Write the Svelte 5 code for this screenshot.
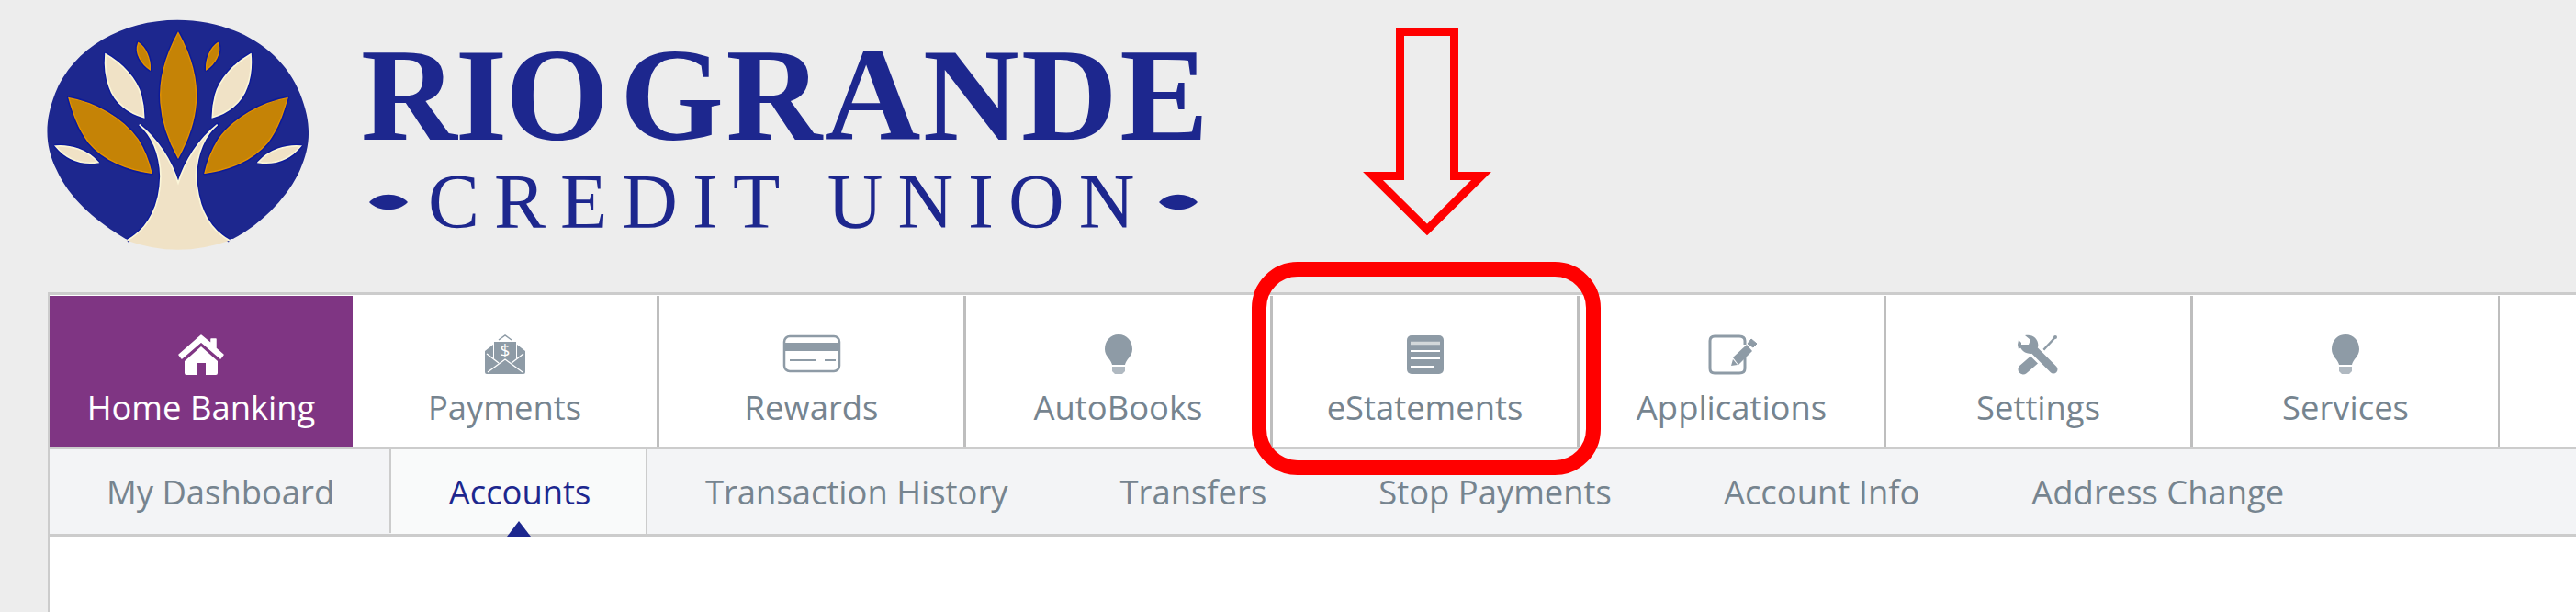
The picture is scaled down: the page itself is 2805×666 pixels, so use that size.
<script>
  const mainItems = [
    { label: "Home Banking", icon: "home", active: true },
    { label: "Payments", icon: "payment" },
    { label: "Rewards", icon: "card" },
    { label: "AutoBooks", icon: "bulb" },
    { label: "eStatements", icon: "statement" },
    { label: "Applications", icon: "edit" },
    { label: "Settings", icon: "tools" },
    { label: "Services", icon: "bulb" },
  ];
  const subItems = [
    "My Dashboard",
    "Accounts",
    "Transaction History",
    "Transfers",
    "Stop Payments",
    "Account Info",
    "Address Change",
  ];
  // leaves of the emblem, left side; the right side is mirrored round x=462
  const goldLeaves = [
    "M105 275C190 290 280 340 330 410C355 450 368 490 375 520C300 510 220 480 170 420C135 375 118 320 105 275Z",
    "M332 95C355 110 372 145 370 182C345 165 318 130 332 95Z",
  ];
  const creamLeaves = [
    "M225 132C275 160 325 210 340 265C348 295 350 315 350 338C300 325 255 290 238 240C225 205 222 165 225 132Z",
    "M62 432C110 428 165 445 200 485C150 492 100 478 62 432Z",
  ];
  const centerLeaf =
    "M462 62C420 140 400 220 405 290C410 360 440 430 462 470C484 430 515 360 520 290C525 220 505 140 462 62Z";
  const trunkSides =
    "M335 362C375 395 403 455 405 530C403 620 370 700 295 740M630 740C555 700 525 620 520 530C522 455 550 395 590 362C530 410 485 480 462 552C440 480 395 410 335 362";
  const trunk =
    "M335 362C375 395 403 455 405 530C403 620 370 700 295 740Q460 800 630 740C555 700 525 620 520 530C522 455 550 395 590 362C530 410 485 480 462 552C440 480 395 410 335 362Z";
</script>

<div class="page">
  <header class="brand">
    <svg class="emblem" viewBox="0 0 930 810">
      <path d="M460 20C640 20 800 110 860 260C900 360 895 430 860 510C820 600 730 690 640 735H290C200 680 110 610 65 510C25 430 25 350 60 260C120 110 280 20 460 20Z" fill="#1d278e" />
      {#each [false, true] as mirrored}
        <g transform={mirrored ? "translate(924 0) scale(-1 1)" : ""}>
          {#each goldLeaves as d}
            <path {d} class="halo" />
            <path {d} class="gold" />
          {/each}
          {#each creamLeaves as d}
            <path {d} class="halo" />
            <path {d} class="cream" />
          {/each}
        </g>
      {/each}
      <path d={centerLeaf} class="halo" />
      <path d={centerLeaf} class="gold" />
      <path d={trunkSides} class="halo" />
      <path d={trunk} class="trunk" />
      <path d={trunkSides} class="trunk-edge" />
    </svg>
    <div class="wordmark">
      <div class="name">RIO <span class="grande">GRANDE</span></div>
      <div class="sub">
        <svg class="dash" viewBox="0 0 42 18"><path d="M0 9C10 -2 32 -2 42 9C32 20 10 20 0 9Z" /></svg>
        <span class="union">CREDIT UNION</span>
        <svg class="dash" viewBox="0 0 42 18"><path d="M0 9C10 -2 32 -2 42 9C32 20 10 20 0 9Z" /></svg>
      </div>
    </div>
  </header>

  <section class="panel">
    <nav class="main">
      {#each mainItems as item}
        <div class="item" class:active={item.active}>
          <svg class="icon" viewBox="0 0 64 44">
            {#if item.icon == "home"}
              <path d="M32 1L8 22L11 26L32 8L53 26L56 22L48 15V5H43V10Z" fill="currentColor" stroke="currentColor" stroke-width="1.5" stroke-linejoin="round" />
              <path d="M32 13L14 29V42Q14 44 16 44H27V31H37V44H48Q50 44 50 42V29Z" fill="currentColor" />
            {:else if item.icon == "payment"}
              <path d="M10 18L19 11V26H45V11L54 18V41Q54 43 52 43H12Q10 43 10 41Z" fill="currentColor" />
              <rect x="20" y="8" width="24" height="20" fill="currentColor" />
              <path d="M25 6L32 1L39 6" fill="none" stroke="currentColor" stroke-width="1.5" />
              <path d="M13 41L32 27L51 41M12 21L25 31M52 21L39 31" stroke="#fff" stroke-width="1.4" fill="none" />
              <text x="32" y="24" text-anchor="middle" class="dollar">$</text>
            {:else if item.icon == "card"}
              <rect x="2" y="2" width="60" height="38" rx="6" fill="none" stroke="currentColor" stroke-width="2.5" />
              <rect x="2" y="9" width="60" height="9" fill="currentColor" />
              <path d="M8 28H36M46 28H58" stroke="currentColor" stroke-width="2" />
            {:else if item.icon == "bulb"}
              <path d="M32 0C23 0 17 7 17 16C17 24 24 27 25 33H39C40 27 47 24 47 16C47 7 41 0 32 0Z" fill="currentColor" />
              <path d="M25 35H39V40L36 43H28L25 40Z" fill="currentColor" opacity="0.7" />
            {:else if item.icon == "statement"}
              <rect x="12" y="1" width="40" height="42" rx="5" fill="currentColor" />
              <path d="M16 9.5H48" stroke="#d3d8da" stroke-width="3.5" />
              <path d="M16 18H48M16 26H48M16 35H41" stroke="#fff" stroke-width="2" />
            {:else if item.icon == "edit"}
              <path d="M46 11V7Q46 2 40 2H13Q8 2 8 7V37Q8 42 13 42H40Q46 42 46 37V21" fill="none" stroke="currentColor" stroke-width="3" />
              <path d="M48 11L54 18L39 33L33 25Z" fill="currentColor" />
              <path d="M31 34L33 27L38 33Z" fill="currentColor" />
              <path d="M49 10L53 5L59 10L55 14Z" fill="currentColor" stroke="currentColor" stroke-linejoin="round" />
            {:else if item.icon == "tools"}
              <path d="M50 3L37 17" stroke="currentColor" stroke-width="2.5" />
              <circle cx="50" cy="3" r="2" fill="currentColor" />
              <path d="M30 25L15 38" stroke="currentColor" stroke-width="11" stroke-linecap="round" />
              <path d="M25 15L49 39" stroke="#fff" stroke-width="15" />
              <path d="M25 15L48 38" stroke="currentColor" stroke-width="9" stroke-linecap="round" />
              <path d="M17 1C26 -1 33 6 31 14L24 21C17 21 12 17 11 11L21 11L23 6Z" fill="currentColor" />
              <path d="M10 6L13 9L13 14L10 16L9 11Z" fill="currentColor" />
            {/if}
          </svg>
          <span>{item.label}</span>
        </div>
      {/each}
    </nav>
    <nav class="sub-nav">
      {#each subItems as item, i}
        <div class="sub-item" class:current={i == 1} class:first={i == 0}>{item}</div>
      {/each}
    </nav>
    <div class="content"></div>
  </section>

  <svg class="callout-arrow" viewBox="0 0 142 227">
    <path d="M41.5 4.5H100.5V161.5H130L71 220L12 161.5H41.5Z" fill="none" stroke="#f00" stroke-width="9" />
  </svg>
  <div class="callout-box"></div>
</div>

<style>
  :global(body) {
    margin: 0;
    background: #ededed;
  }
  .page {
    position: relative;
    height: 666px;
    overflow: hidden;
    font-family: "Open Sans", sans-serif;
  }
  .brand {
    display: flex;
    height: 318px;
    padding: 15px 0 0 40px;
    box-sizing: border-box;
  }
  .emblem {
    width: 310px;
    height: 270px;
    flex: none;
  }
  .halo {
    fill: none;
    stroke: #0c1a9a;
    stroke-width: 13;
    stroke-linejoin: round;
  }
  .gold {
    fill: #c58306;
    stroke: #e39200;
    stroke-width: 4;
  }
  .cream {
    fill: #f0e2c6;
    stroke: #fbf6d8;
    stroke-width: 5;
  }
  .trunk {
    fill: #f0e2c6;
  }
  .trunk-edge {
    fill: none;
    stroke: #fbf6d8;
    stroke-width: 5;
  }
  .wordmark {
    margin-left: 43px;
    font-family: "Liberation Serif", serif;
    color: #1d278e;
  }
  .name {
    font-size: 145px;
    font-weight: bold;
    line-height: 96px;
    letter-spacing: -2px;
    margin-top: 40px;
    word-spacing: -20px;
    white-space: nowrap;
  }
  .grande {
    letter-spacing: 2.5px;
  }
  .sub {
    display: flex;
    align-items: center;
    margin-top: 41px;
    margin-left: 9px;
  }
  .union {
    font-size: 84px;
    line-height: 56px;
    letter-spacing: 16px;
    margin: 0 11px 0 22px;
    white-space: nowrap;
  }
  .dash {
    width: 42px;
    height: 18px;
    fill: #1d278e;
    flex: none;
  }
  .panel {
    margin-left: 52px;
    border-top: 3px solid #ccc;
    border-left: 2px solid #ccc;
    background: #fff;
    height: 345px;
  }
  .main {
    display: flex;
    height: 164px;
    padding-top: 1px;
    border-bottom: 3px solid #ccc;
  }
  .item {
    width: 334px;
    box-sizing: border-box;
    border-right: 3px solid #bebebe;
    display: flex;
    flex-direction: column;
    align-items: center;
    color: #76848f;
    font-size: 36.4px;
    line-height: 50px;
  }
  .item.active {
    width: 330px;
    background: #7f3583;
    color: #fff;
    border-right: none;
  }
  .item:last-child {
    border-right-width: 2px;
  }
  .icon {
    width: 64px;
    height: 44px;
    margin: 42px 0 10px;
    color: #8e9ba6;
    flex: none;
  }
  .active .icon {
    color: #fff;
  }
  .dollar {
    font-size: 19px;
    fill: #fff;
    font-family: "Open Sans", sans-serif;
  }
  .sub-nav {
    display: flex;
    height: 92px;
    background: #f3f4f6;
    border-bottom: 3px solid #ccc;
    color: #76848f;
    font-size: 36.4px;
    line-height: 92px;
  }
  .sub-item {
    padding: 0 61px;
    height: 91px;
    white-space: nowrap;
  }
  .sub-item.first {
    padding-left: 62px;
    padding-right: 60px;
    border-right: 2px solid #ccc;
  }
  .sub-item.current {
    position: relative;
    background: #f9fafa;
    color: #1d278e;
    padding: 0 59.5px 0 62.5px;
    height: 92px;
    border-right: 2px solid #ccc;
  }
  .sub-item.current + .sub-item {
    padding-left: 63px;
  }
  .sub-item.current::after {
    content: "";
    position: absolute;
    left: 50%;
    bottom: -3px;
    margin-left: -13px;
    border: 13px solid transparent;
    border-top: 0;
    border-bottom: 17px solid #1d278e;
  }
  .callout-arrow {
    position: absolute;
    left: 1483px;
    top: 30px;
    width: 142px;
    height: 227px;
  }
  .callout-box {
    position: absolute;
    left: 1363px;
    top: 285px;
    width: 380px;
    height: 232px;
    box-sizing: border-box;
    border: 16px solid #f00;
    border-radius: 50px;
  }
</style>
